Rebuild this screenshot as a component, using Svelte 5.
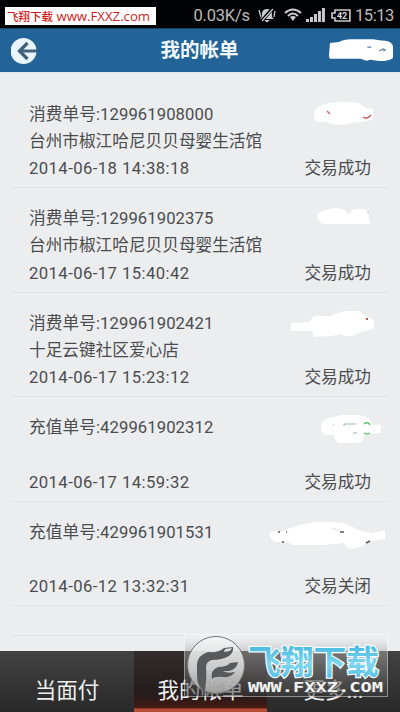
<script lang="ts">
	type Bill = { kind: string, no: string, shop: string, time: string, status: string }
	const bills: Bill[] = [
		{ kind: '消费单号', no: '129961908000', shop: '台州市椒江哈尼贝贝母婴生活馆', time: '2014-06-18 14:38:18', status: '交易成功' },
		{ kind: '消费单号', no: '129961902375', shop: '台州市椒江哈尼贝贝母婴生活馆', time: '2014-06-17 15:40:42', status: '交易成功' },
		{ kind: '消费单号', no: '129961902421', shop: '十足云键社区爱心店', time: '2014-06-17 15:23:12', status: '交易成功' },
		{ kind: '充值单号', no: '429961902312', shop: '', time: '2014-06-17 14:59:32', status: '交易成功' },
		{ kind: '充值单号', no: '429961901531', shop: '', time: '2014-06-12 13:32:31', status: '交易关闭' }
	]
	// hidden amounts, drawn in a 120x32 box
	const masks = [
		'M49 14Q49 6 57 4L65 2Q82 0 94 2L101 7L108 8V18Q100 22 91 21Q80 25 67 23L62 21H52Q49 19 49 14Z',
		'M52 12Q52 7 60 5Q69 2 78 4L84 10L87 5Q92 3 96 4Q104 3 104 13L105 19H58Q53 17 52 12Z',
		'M26 13L44 12L49 6H66Q75 1 84 1H94L101 6L109 10V19L96 22L87 26H80L76 24L66 26L49 27L47 21H26Z',
		'M56 10Q59 4 69 3L76 1H94L101 3Q106 5 107 10L116 11V19L104 20L99 21Q99 29 92 29H74Q69 27 69 21H60Q55 18 56 10Z',
		'M5 13L19 12Q30 6 44 4Q61 1 79 4L96 12L107 14L120 11V20L105 22L98 27L87 30Q80 29 79 24L59 26H28L22 23H10Q3 20 5 13Z'
	]
	let tab = $state(1)
</script>

<main>
	<div class="status">
		<span class="badge"><b>飞翔下载</b> www.FXXZ.com</span>
		<span class="speed">0.03K/s</span>
		<svg class="bell" viewBox="0 0 18 18">
			<path d="M2 13L4 11V7Q5 3 9 3Q14 3 14 7V11L16 13ZM6 14H12L9 16.5Z" fill="#ccc" />
			<path d="M3 16L15 2" stroke="#000" stroke-width="3.5" />
			<path d="M4 15L15 3M1 4L3 11M17 5L16 11" stroke="#ccc" stroke-width="1.3" />
		</svg>
		<svg class="wifi" viewBox="0 0 18 14">
			<path d="M1 5Q9 -2 17 5M4 8Q9 3 14 8" fill="none" stroke="#ccc" stroke-width="2" />
			<path d="M6 9Q9 7 12 9L9 13Z" fill="#ccc" />
		</svg>
		<svg class="signal" viewBox="0 0 19 14">
			<path d="M0 11H3V14H0ZM4 9H7V14H4ZM8 6H11V14H8ZM12 3H15V14H12ZM16 0H19V14H16Z" fill="#ccc" />
		</svg>
		<svg class="battery" viewBox="0 0 20 13">
			<path d="M4 1H19V12H4V9H1V4H4Z" fill="none" stroke="#ccc" stroke-width="1.6" />
			<text x="6" y="9.8">42</text>
		</svg>
		<span class="clock">15:13</span>
	</div>

	<header>
		<button class="back" aria-label="返回">
			<svg viewBox="0 0 26 28">
				<circle cx="12.5" cy="14" r="13" fill="#e9f4fb" />
				<path d="M16.5 6L8.5 14L16.5 22" fill="none" stroke="#3c5f7a" stroke-width="3.2" />
				<path d="M9 14H26" stroke="#41647e" stroke-width="3" />
			</svg>
		</button>
		<h1>我的帐单</h1>
		<svg class="account" viewBox="0 0 66 24">
			<path d="M1 5L10 4Q14 1 23 1H45L51 2Q65 2 65 9V20Q59 24 49 23L42 22L38 23L32 21H2Q0 21 0 17Z" fill="#fff" />
			<path d="M39 9H43M51 13L55 11L57 12L55 13" fill="none" stroke="#5c7f99" stroke-width="1.2" />
		</svg>
	</header>

	<section class="list">
		{#each bills as bill, i}
			<article>
				<div class="row">
					<p class="no">{bill.kind}:{bill.no}</p>
					<svg class="amount" viewBox="0 0 120 32">
						<path d={masks[i]} fill="#fff" />
						{#if i === 0}
							<path d="M62 10L65 13" stroke="#c66" stroke-width="1.5" />
							<path d="M98 16Q102 19 106 14" fill="none" stroke="#d45b5b" stroke-width="1.5" />
						{:else if i === 1}
							<path d="M102 7H104" stroke="#bbb" />
						{:else if i === 2}
							<path d="M101 9H103" stroke="#c55" stroke-width="2" />
						{:else if i === 3}
							<path d="M79 12V10H91M88 19H92M68 11H69" fill="none" stroke="#9db8a3" />
							<path d="M99 10Q103 7 105 11M99 19Q102 21 105 19" fill="none" stroke="#54c767" stroke-width="1.5" />
						{:else}
							<path d="M13 13H15M21 13H22M17 23H19M75 13H79M101 24L105 22" stroke="#555" stroke-width="1.5" />
							<path d="M67 9L74 12" stroke="#ddd" />
						{/if}
					</svg>
				</div>
				<p class="shop">{bill.shop}</p>
				<div class="row">
					<p class="time">{bill.time}</p>
					<p class="result">{bill.status}</p>
				</div>
			</article>
		{/each}
		<div class="more"></div>
	</section>

	<nav>
		{#each ['当面付', '我的帐单', '更多...'] as name, i}
			<button class:active={tab === i} onclick={() => tab = i}>{name}</button>
		{/each}
	</nav>

	<svg class="logo" viewBox="0 0 204 64">
		<defs>
			<linearGradient id="sky" x1="0" y1="0" x2="0" y2="1">
				<stop offset="0" stop-color="#3fb4df" />
				<stop offset=".55" stop-color="#7fd6ee" />
				<stop offset="1" stop-color="#4fbce2" />
			</linearGradient>
			<linearGradient id="disc" x1="0" y1="0" x2="0" y2="1">
				<stop offset="0" stop-color="#f7f8f8" />
				<stop offset=".6" stop-color="#d4d4d4" />
				<stop offset="1" stop-color="#a2a2a2" />
			</linearGradient>
			<linearGradient id="glass" x1="0" y1="0" x2="0" y2="1">
				<stop offset="0" stop-color="#fff" stop-opacity=".4" />
				<stop offset=".28" stop-color="#aaa" stop-opacity=".5" />
				<stop offset="1" stop-color="#3a3a3a" stop-opacity=".55" />
			</linearGradient>
		</defs>
		<rect x=".5" y=".5" width="203" height="62" fill="url(#glass)" stroke="#fff" stroke-opacity=".45" />
		<circle cx="32" cy="31" r="28.5" fill="url(#disc)" fill-opacity=".9" stroke="#707274" />
		<path d="M20 57Q13 52 13 42V30Q14 21 24 18Q35 19 40 14L49 13Q50 18 45 22Q38 26 28 26Q22 27 22 34Q23 42 21 57ZM28 45Q26 36 34 33Q43 33 46 29L54 28Q53 35 45 37H39Q43 40 51 38Q47 44 39 43Q31 42 28 45Z" fill="#57595b" />
		<path d="M41 15L48 14L46 17L40 18Z" fill="#d9dadb" />
		<text class="name" x="64" y="39.5" textLength="131" lengthAdjust="spacingAndGlyphs">飞翔下载</text>
		<text class="site" x="64" y="58" textLength="135" lengthAdjust="spacingAndGlyphs">WWW.FXXZ.COM</text>
	</svg>
</main>

<style>
	:global(body) {
		margin: 0;
	}
	main {
		width: 400px;
		height: 712px;
		display: flex;
		flex-direction: column;
		position: relative;
		overflow: hidden;
		background: #ebedef;
		color: #4b4c4e;
		font-family: Roboto, "Noto Sans CJK SC", sans-serif;
	}
	p, h1 {
		margin: 0;
	}
	button {
		border: 0;
		padding: 0;
		background: none;
		font-family: inherit;
		cursor: pointer;
	}
	.status {
		height: 28px;
		box-sizing: border-box;
		padding: 2px 6px 0 5px;
		display: flex;
		align-items: center;
		background: #020305;
		color: #bbb;
		flex-shrink: 0;
		.badge {
			width: 152px;
			height: 18px;
			margin: 1px 37px 0 0;
			box-sizing: border-box;
			padding-left: 2px;
			background: #fff;
			color: #d01c20;
			font: 13.2px/18px "Open Sans", "Noto Sans CJK SC", sans-serif;
			white-space: nowrap;
			b {
				font-size: 11.5px;
				font-weight: 500;
			}
		}
		.speed {
			width: 65px;
			font-size: 16.5px;
			letter-spacing: -0.2px;
		}
		.bell {
			width: 18px;
			height: 18px;
		}
		.wifi {
			width: 18px;
			height: 14px;
			margin-left: 8px;
		}
		.signal {
			width: 19px;
			height: 14px;
			margin-left: 4px;
		}
		.battery {
			width: 20px;
			height: 13px;
			margin-left: 6px;
			text {
				fill: #ddd;
				font-size: 9px;
				font-weight: 700;
			}
		}
		.clock {
			margin-left: 4px;
			font-size: 16.5px;
			letter-spacing: -0.4px;
		}
	}
	header {
		height: 44px;
		box-sizing: border-box;
		padding: 0 6px 0 11px;
		display: grid;
		grid-template-columns: 59px 1fr 65px;
		align-items: center;
		background: #226497;
		border-top: 1px solid #174768;
		flex-shrink: 0;
		.back {
			width: 26px;
			height: 28px;
		}
		.back svg {
			display: block;
			width: 26px;
			height: 28px;
		}
		h1 {
			color: #f4faff;
			font-size: 19.5px;
			font-weight: 700;
			line-height: 28px;
			text-align: center;
		}
		.account {
			width: 65px;
			height: 24px;
			margin-bottom: 2px;
		}
	}
	.list {
		flex: 1;
		padding: 10.5px 12px 0;
		border-top: 1px solid #dce9f2;
	}
	article {
		height: 104.6px;
		box-sizing: border-box;
		padding: 17px 17px 0;
		border-bottom: 1px solid #dfe1e3;
		font-size: 16.67px;
		line-height: 27px;
		white-space: nowrap;
	}
	.row {
		height: 27.3px;
		display: flex;
		justify-content: space-between;
		align-items: flex-start;
	}
	.amount {
		width: 120px;
		height: 32px;
		margin: 0 -14px 0 0;
	}
	.no {
		letter-spacing: 0.08px;
	}
	.shop {
		height: 27.3px;
	}
	.time {
		letter-spacing: 0.43px;
	}
	.more {
		height: 29px;
		border-bottom: 1px solid #dfe1e3;
	}
	nav {
		height: 61px;
		display: grid;
		grid-template-columns: 134px 133px 133px;
		background: linear-gradient(#424242, #292929);
		flex-shrink: 0;
		button {
			padding-top: 19px;
			color: #eee;
			font-size: 21.5px;
			line-height: 40px;
		}
		.active {
			background: linear-gradient(#332c2d, #241b1b 70%, #451a12 93%, #b64d34 95%);
		}
	}
	/* site stamp over the tab bar */
	.logo {
		position: absolute;
		left: 184px;
		top: 634px;
		width: 204px;
		height: 64px;
		.name {
			fill: url(#sky);
			stroke: #f5fcff;
			stroke-width: 2.5px;
			paint-order: stroke;
			font-size: 33px;
			font-weight: 700;
		}
		.site {
			fill: #f2f2f2;
			stroke: #555;
			stroke-width: 1px;
			paint-order: stroke;
			font: 700 14px "DejaVu Sans Mono", monospace;
		}
	}
</style>
